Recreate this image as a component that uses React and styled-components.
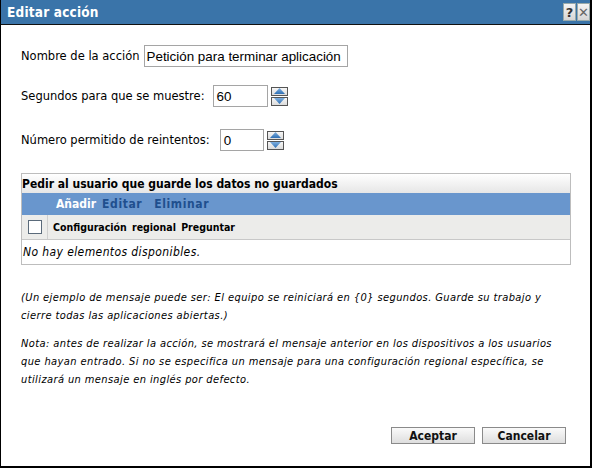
import React from "react";
import styled, { createGlobalStyle } from "styled-components";

const Global = createGlobalStyle`
  html, body { margin: 0; padding: 0; background: #fff; }
  * { box-sizing: border-box; }
`;

const Dialog = styled.div`
  width: 592px;
  height: 468px;
  border-left: 1px solid #000;
  border-right: 2px solid #000;
  border-bottom: 2px solid #000;
  background: #fff;
  display: flex;
  flex-direction: column;
  font-family: "DejaVu Sans", sans-serif;
  color: #000;
`;

const TitleBar = styled.div`
  height: 25px;
  background: #3a74a9;
  border-bottom: 1px solid #111;
  display: flex;
  align-items: center;
  padding-left: 6px;
  padding-right: 0;
`;

const Title = styled.div`
  flex: 1;
  color: #fff;
  font-family: "DejaVu Sans Condensed", "DejaVu Sans", sans-serif;
  font-weight: bold;
  font-size: 13.5px;
  letter-spacing: 0.2px;
`;

const TitleBtn = styled.div`
  width: 13px;
  height: 18px;
  margin-left: 1px;
  background: linear-gradient(#f4f4f4, #d6d6d6);
  border: 1px solid #9aa;
  display: flex;
  align-items: center;
  justify-content: center;
  font-family: "DejaVu Sans", sans-serif;
  font-weight: ${(p) => (p.$bold ? "bold" : "normal")};
  font-size: 13px;
  color: ${(p) => (p.$bold ? "#333" : "#666")};
`;

const Body = styled.div`
  flex: 1;
  display: flex;
  flex-direction: column;
  padding: 20px 20px 0 20px;
`;

const FieldRow = styled.div`
  display: flex;
  align-items: center;
  height: 22px;
  margin-bottom: ${(p) => p.$mb}px;
  font-size: 11.5px;
`;

const Label = styled.span`
  margin-right: ${(p) => p.$gap}px;
  white-space: nowrap;
`;

const TextInput = styled.div`
  width: ${(p) => p.$w}px;
  height: 22px;
  border: 1px solid #a5a5a5;
  display: flex;
  align-items: center;
  padding-left: ${(p) => p.$pl}px;
  font-family: "Liberation Sans", Arial, sans-serif;
  font-size: 13.4px;
  white-space: nowrap;
`;

const Spinner = styled.div`
  display: flex;
  flex-direction: column;
  gap: 1px;
  margin-left: 3px;
`;

const SpinBtn = styled.div`
  width: 17px;
  height: 9px;
  border: 1px solid #555;
  background: linear-gradient(#f6f6f6, #dcdcdc);
  display: flex;
  align-items: center;
  justify-content: center;
`;

const Table = styled.div`
  width: 550px;
  border: 1px solid #bdbdbd;
  display: flex;
  flex-direction: column;
`;

const TableHead = styled.div`
  height: 19px;
  background: linear-gradient(#ffffff, #e6e6e6);
  display: flex;
  align-items: center;
  font-family: "DejaVu Sans Condensed", "DejaVu Sans", sans-serif;
  font-weight: bold;
  font-size: 12px;
`;

const Toolbar = styled.div`
  height: 22px;
  background: #6996cd;
  display: flex;
  align-items: center;
  padding-left: 34px;
  font-family: "DejaVu Sans Condensed", "DejaVu Sans", sans-serif;
  font-weight: bold;
  font-size: 12px;
`;

const ToolLink = styled.span`
  margin-right: ${(p) => p.$mr}px;
  color: ${(p) => (p.$active ? "#ffffff" : "#1f4f8e")};
  letter-spacing: ${(p) => (p.$active ? 0 : 0.6)}px;
`;

const ColHead = styled.div`
  height: 25px;
  background: #ececea;
  border-bottom: 1px solid #c8c8c8;
  display: flex;
  align-items: stretch;
  font-family: "DejaVu Sans Condensed", "DejaVu Sans", sans-serif;
  font-weight: bold;
  font-size: 10.5px;
`;

const CheckCell = styled.div`
  width: 26px;
  border-right: 1px solid #cfcfcf;
  display: flex;
  align-items: center;
  justify-content: center;
  padding-left: 1px;
`;

const Check = styled.div`
  width: 14px;
  height: 14px;
  border: 1px solid #5a6a7a;
  background: #fff;
`;

const ColLabel = styled.div`
  display: flex;
  align-items: center;
  padding-left: 5px;
  white-space: nowrap;
  word-spacing: 2px;
`;

const EmptyRow = styled.div`
  height: 24px;
  display: flex;
  align-items: center;
  padding-left: 1px;
  font-family: "DejaVu Sans Condensed", "DejaVu Sans", sans-serif;
  font-style: italic;
  font-size: 12px;
  letter-spacing: 0.4px;
`;

const Note = styled.p`
  margin: ${(p) => p.$mt}px 0 0 0;
  font-family: "DejaVu Sans Condensed", "DejaVu Sans", sans-serif;
  font-style: italic;
  font-size: 11px;
  letter-spacing: 0.4px;
  line-height: 18px;
  width: 552px;
`;

const Buttons = styled.div`
  margin-top: auto;
  margin-bottom: 22px;
  display: flex;
  justify-content: flex-end;
  gap: 7px;
  padding-right: 4px;
`;

const Button = styled.div`
  width: 84px;
  height: 17px;
  border: 1px solid #8a8a8a;
  background: linear-gradient(#fafafa, #dedede);
  display: flex;
  align-items: center;
  justify-content: center;
  font-family: "DejaVu Sans Condensed", "DejaVu Sans", sans-serif;
  font-weight: bold;
  font-size: 12px;
  color: #111;
`;

const Arrow = ({ up }) => (
  <svg width="11" height="6" viewBox="0 0 11 6">
    <defs>
      <linearGradient id={up ? "ga" : "gb"} x1="0" y1="0" x2="0" y2="1">
        <stop offset="0" stopColor="#7fb0e0" />
        <stop offset="1" stopColor="#2e6fb4" />
      </linearGradient>
    </defs>
    <polygon
      points={up ? "5.5,0 11,6 0,6" : "0,0 11,0 5.5,6"}
      fill={`url(#${up ? "ga" : "gb"})`}
    />
  </svg>
);

const Spin = () => (
  <Spinner>
    <SpinBtn>
      <Arrow up />
    </SpinBtn>
    <SpinBtn>
      <Arrow />
    </SpinBtn>
  </Spinner>
);

const EXAMPLE =
  "(Un ejemplo de mensaje puede ser: El equipo se reiniciará en {0} segundos. Guarde su trabajo y cierre todas las aplicaciones abiertas.)";
const NOTE =
  "Nota: antes de realizar la acción, se mostrará el mensaje anterior en los dispositivos a los usuarios que hayan entrado. Si no se especifica un mensaje para una configuración regional específica, se utilizará un mensaje en inglés por defecto.";

export default function App() {
  return (
    <>
      <Global />
      <Dialog>
        <TitleBar>
          <Title>Editar acción</Title>
          <TitleBtn $bold>?</TitleBtn>
          <TitleBtn>✕</TitleBtn>
        </TitleBar>
        <Body>
          <FieldRow $mb={18}>
            <Label $gap={4}>Nombre de la acción</Label>
            <TextInput $w={204} $pl={2}>
              Petición para terminar aplicación
            </TextInput>
          </FieldRow>
          <FieldRow $mb={22}>
            <Label $gap={8}>Segundos para que se muestre:</Label>
            <TextInput $w={55} $pl={3}>
              60
            </TextInput>
            <Spin />
          </FieldRow>
          <FieldRow $mb={22}>
            <Label $gap={10}>Número permitido de reintentos:</Label>
            <TextInput $w={44} $pl={3}>
              0
            </TextInput>
            <Spin />
          </FieldRow>
          <Table>
            <TableHead>Pedir al usuario que guarde los datos no guardados</TableHead>
            <Toolbar>
              <ToolLink $active $mr={6}>Añadir</ToolLink>
              <ToolLink $mr={12}>Editar</ToolLink>
              <ToolLink $mr={0}>Eliminar</ToolLink>
            </Toolbar>
            <ColHead>
              <CheckCell>
                <Check />
              </CheckCell>
              <ColLabel>Configuración regional Preguntar</ColLabel>
            </ColHead>
            <EmptyRow>No hay elementos disponibles.</EmptyRow>
          </Table>
          <Note $mt={24}>{EXAMPLE}</Note>
          <Note $mt={10}>{NOTE}</Note>
          <Buttons>
            <Button>Aceptar</Button>
            <Button>Cancelar</Button>
          </Buttons>
        </Body>
      </Dialog>
    </>
  );
}
